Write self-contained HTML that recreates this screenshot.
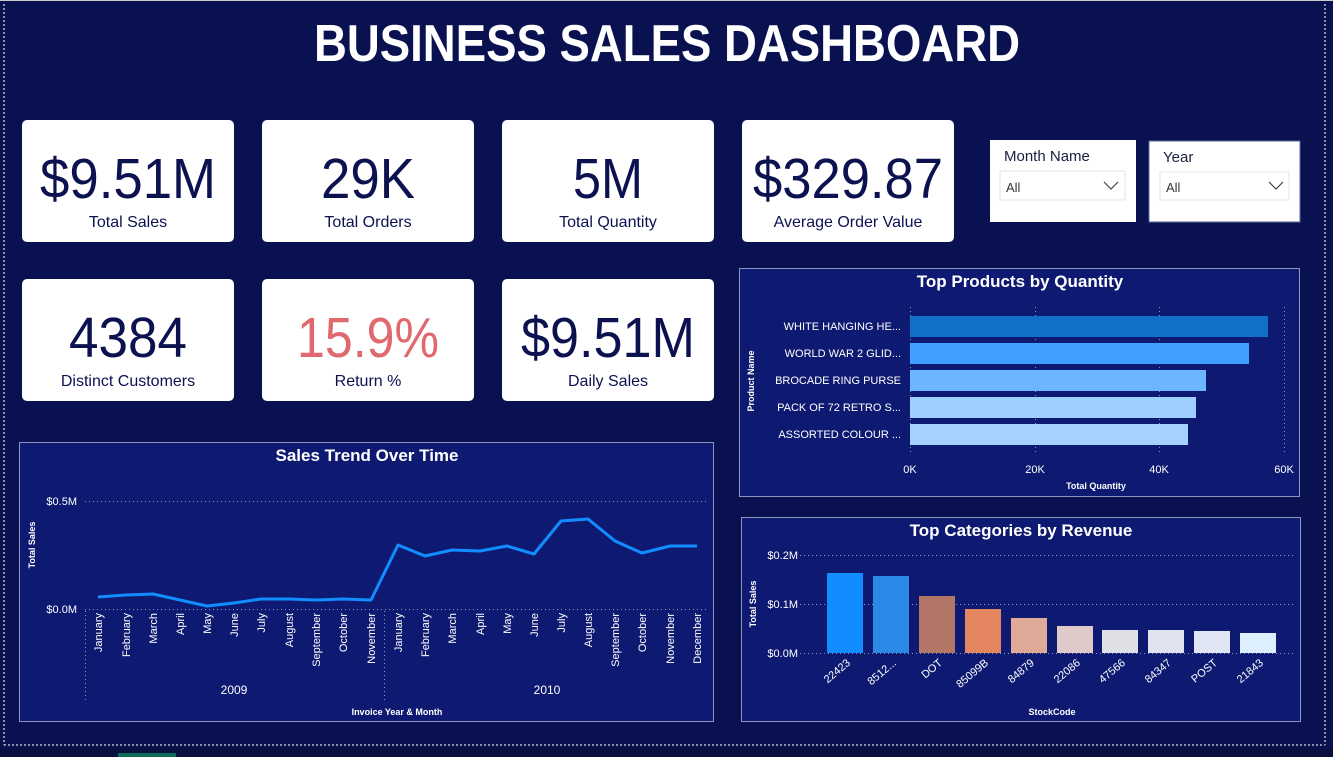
<!DOCTYPE html>
<html><head><meta charset="utf-8"><style>
html,body{margin:0;padding:0;background:#0a1150;}
svg{display:block;font-family:"Liberation Sans",sans-serif;}
</style></head><body>
<svg width="1333" height="757" viewBox="0 0 1333 757" xmlns="http://www.w3.org/2000/svg">
<rect width="1333" height="757" fill="#0a1150"/>
<rect x="0" y="0" width="1333" height="1" fill="#ccc"/>
<rect x="0" y="748" width="1333" height="9" fill="#081040"/>
<rect x="118" y="753" width="58" height="4" fill="#0e6b5a"/>
<line x1="4" y1="4" x2="4" y2="745" stroke="#8a8fa8" stroke-width="2" stroke-dasharray="2 2"/>
<line x1="1325" y1="4" x2="1325" y2="745" stroke="#8a8fa8" stroke-width="2" stroke-dasharray="2 2"/>
<line x1="4" y1="745" x2="1325" y2="745" stroke="#8a8fa8" stroke-width="2" stroke-dasharray="2 2"/>

<text x="667" y="61" fill="#fff" font-weight="bold" font-size="52" text-anchor="middle" textLength="706" lengthAdjust="spacingAndGlyphs">BUSINESS SALES DASHBOARD</text>

<g font-size="57" fill="#0c1250" text-anchor="middle">
<rect x="22" y="120" width="212" height="122" rx="5" fill="#fff"/>
<text x="128" y="198" textLength="176" lengthAdjust="spacingAndGlyphs">$9.51M</text>
<rect x="262" y="120" width="212" height="122" rx="5" fill="#fff"/>
<text x="368" y="198" textLength="94" lengthAdjust="spacingAndGlyphs">29K</text>
<rect x="502" y="120" width="212" height="122" rx="5" fill="#fff"/>
<text x="608" y="198" textLength="70" lengthAdjust="spacingAndGlyphs">5M</text>
<rect x="742" y="120" width="212" height="122" rx="5" fill="#fff"/>
<text x="848" y="198" textLength="190" lengthAdjust="spacingAndGlyphs">$329.87</text>
<rect x="22" y="279" width="212" height="122" rx="5" fill="#fff"/>
<text x="128" y="357" textLength="118" lengthAdjust="spacingAndGlyphs">4384</text>
<rect x="262" y="279" width="212" height="122" rx="5" fill="#fff"/>
<text x="368" y="357" fill="#e0686f" textLength="142" lengthAdjust="spacingAndGlyphs">15.9%</text>
<rect x="502" y="279" width="212" height="122" rx="5" fill="#fff"/>
<text x="608" y="357" textLength="174" lengthAdjust="spacingAndGlyphs">$9.51M</text>
</g>
<g font-size="16" fill="#0c1250" text-anchor="middle">
<text x="128" y="227">Total Sales</text>
<text x="368" y="227">Total Orders</text>
<text x="608" y="227">Total Quantity</text>
<text x="848" y="227">Average Order Value</text>
<text x="128" y="386">Distinct Customers</text>
<text x="368" y="386">Return %</text>
<text x="608" y="386">Daily Sales</text>
</g>

<!-- slicers -->
<rect x="990" y="140" width="146" height="82" fill="#fff"/>
<text x="1004" y="161" font-size="15" fill="#1a2040">Month Name</text>
<rect x="1000" y="171" width="125" height="29" fill="#fff" stroke="#e6e6e6"/>
<text x="1006" y="192" font-size="13" fill="#333">All</text>
<path d="M1104 182 L1111 189 L1118 182" fill="none" stroke="#444" stroke-width="1.2"/>
<rect x="1149" y="141" width="151" height="81" fill="#fff" stroke="#5a6a9a"/>
<text x="1163" y="162" font-size="15" fill="#1a2040">Year</text>
<rect x="1160" y="172" width="129" height="28" fill="#fff" stroke="#e6e6e6"/>
<text x="1166" y="192" font-size="13" fill="#333">All</text>
<path d="M1269 182 L1276 189 L1283 182" fill="none" stroke="#444" stroke-width="1.2"/>

<!-- products -->
<rect x="739.5" y="268.5" width="560" height="228" fill="#0e1a72" stroke="#8c95c0"/>
<text x="1020" y="287" font-size="17" font-weight="bold" fill="#fff" text-anchor="middle">Top Products by Quantity</text>
<g stroke="#8c95c0" stroke-dasharray="1 3">
<line x1="910.5" y1="307" x2="910.5" y2="452"/><line x1="1035.5" y1="307" x2="1035.5" y2="452"/>
<line x1="1159.5" y1="307" x2="1159.5" y2="452"/><line x1="1284.5" y1="307" x2="1284.5" y2="452"/>
</g>
<rect x="910" y="316" width="358" height="21" fill="#1170c8"/>
<rect x="910" y="343" width="339" height="21" fill="#3fa0ff"/>
<rect x="910" y="370" width="296" height="21" fill="#6cb6ff"/>
<rect x="910" y="397" width="286" height="21" fill="#9fcfff"/>
<rect x="910" y="424" width="278" height="21" fill="#a5d2ff"/>
<g font-size="11" fill="#fff" text-anchor="end">
<text x="901" y="330">WHITE HANGING HE...</text>
<text x="901" y="357">WORLD WAR 2 GLID...</text>
<text x="901" y="384">BROCADE RING PURSE</text>
<text x="901" y="411">PACK OF 72 RETRO S...</text>
<text x="901" y="438">ASSORTED COLOUR ...</text>
</g>
<g font-size="11" fill="#fff" text-anchor="middle">
<text x="910" y="473">0K</text><text x="1035" y="473">20K</text><text x="1159" y="473">40K</text><text x="1284" y="473">60K</text>
<text x="1096" y="489" font-size="9" font-weight="bold">Total Quantity</text>
</g>
<text transform="translate(754,381) rotate(-90)" font-size="9" font-weight="bold" fill="#fff" text-anchor="middle">Product Name</text>

<!-- categories -->
<rect x="741.5" y="517.5" width="559" height="204" fill="#0e1a72" stroke="#8c95c0"/>
<text x="1021" y="536" font-size="17" font-weight="bold" fill="#fff" text-anchor="middle">Top Categories by Revenue</text>
<g stroke="#8c95c0" stroke-dasharray="1 3">
<line x1="800" y1="555.5" x2="1295" y2="555.5"/><line x1="800" y1="604.5" x2="1295" y2="604.5"/><line x1="800" y1="653.5" x2="1295" y2="653.5"/>
</g>
<g font-size="11" fill="#fff" text-anchor="end">
<text x="798" y="559">$0.2M</text><text x="798" y="608">$0.1M</text><text x="798" y="657">$0.0M</text>
</g>
<text transform="translate(756,604) rotate(-90)" font-size="9" font-weight="bold" fill="#fff" text-anchor="middle">Total Sales</text>
<rect x="827" y="573" width="36" height="80" fill="#118dff"/>
<rect x="873" y="576" width="36" height="77" fill="#2b8ae8"/>
<rect x="919" y="596" width="36" height="57" fill="#b37566"/>
<rect x="965" y="609" width="36" height="44" fill="#e48760"/>
<rect x="1011" y="618" width="36" height="35" fill="#e0aa98"/>
<rect x="1057" y="626" width="36" height="27" fill="#dfc9c9"/>
<rect x="1102" y="630" width="36" height="23" fill="#dfe0e6"/>
<rect x="1148" y="630" width="36" height="23" fill="#dfe3ee"/>
<rect x="1194" y="631" width="36" height="22" fill="#e0e6f4"/>
<rect x="1240" y="633" width="36" height="20" fill="#ddeeff"/>
<g font-size="11" fill="#fff" text-anchor="end">
<text transform="translate(851,664) rotate(-40)">22423</text>
<text transform="translate(897,664) rotate(-40)">8512...</text>
<text transform="translate(943,664) rotate(-40)">DOT</text>
<text transform="translate(989,664) rotate(-40)">85099B</text>
<text transform="translate(1035,664) rotate(-40)">84879</text>
<text transform="translate(1081,664) rotate(-40)">22086</text>
<text transform="translate(1126,664) rotate(-40)">47566</text>
<text transform="translate(1172,664) rotate(-40)">84347</text>
<text transform="translate(1218,664) rotate(-40)">POST</text>
<text transform="translate(1264,664) rotate(-40)">21843</text>
</g>
<text x="1052" y="715" font-size="9" font-weight="bold" fill="#fff" text-anchor="middle">StockCode</text>

<!-- trend -->
<rect x="19.5" y="442.5" width="694" height="279" fill="#0e1a72" stroke="#8c95c0"/>
<text x="367" y="461" font-size="17" font-weight="bold" fill="#fff" text-anchor="middle">Sales Trend Over Time</text>
<g stroke="#8c95c0" stroke-dasharray="1 3">
<line x1="85" y1="501.5" x2="708" y2="501.5"/><line x1="85" y1="609.5" x2="708" y2="609.5"/>
<line x1="85.5" y1="611" x2="85.5" y2="700"/><line x1="384.5" y1="611" x2="384.5" y2="700"/>
</g>
<g font-size="11" fill="#fff" text-anchor="end">
<text x="77" y="505">$0.5M</text><text x="77" y="613">$0.0M</text>
</g>
<text transform="translate(35,545) rotate(-90)" font-size="9" font-weight="bold" fill="#fff" text-anchor="middle">Total Sales</text>
<polyline fill="none" stroke="#118dff" stroke-width="3" stroke-linejoin="round" points="98,597 126,595 153,594 180,600 207,606 234,603 261,599 289,599 316,600 343,599 371,600 398,545 425,556 452,550 480,551 507,546 534,554 561,521 588,519 615,541 642,553 670,546 697,546"/>
<g font-size="11" fill="#fff" text-anchor="end">
<text transform="translate(102,613) rotate(-90)">January</text>
<text transform="translate(130,613) rotate(-90)">February</text>
<text transform="translate(157,613) rotate(-90)">March</text>
<text transform="translate(184,613) rotate(-90)">April</text>
<text transform="translate(211,613) rotate(-90)">May</text>
<text transform="translate(238,613) rotate(-90)">June</text>
<text transform="translate(265,613) rotate(-90)">July</text>
<text transform="translate(293,613) rotate(-90)">August</text>
<text transform="translate(320,613) rotate(-90)">September</text>
<text transform="translate(347,613) rotate(-90)">October</text>
<text transform="translate(375,613) rotate(-90)">November</text>
<text transform="translate(402,613) rotate(-90)">January</text>
<text transform="translate(429,613) rotate(-90)">February</text>
<text transform="translate(456,613) rotate(-90)">March</text>
<text transform="translate(484,613) rotate(-90)">April</text>
<text transform="translate(511,613) rotate(-90)">May</text>
<text transform="translate(538,613) rotate(-90)">June</text>
<text transform="translate(565,613) rotate(-90)">July</text>
<text transform="translate(592,613) rotate(-90)">August</text>
<text transform="translate(619,613) rotate(-90)">September</text>
<text transform="translate(646,613) rotate(-90)">October</text>
<text transform="translate(674,613) rotate(-90)">November</text>
<text transform="translate(701,613) rotate(-90)">December</text>
</g>
<g font-size="12" fill="#fff" text-anchor="middle">
<text x="234" y="694">2009</text><text x="547" y="694">2010</text>
<text x="397" y="715" font-size="9" font-weight="bold">Invoice Year &amp; Month</text>
</g>
</svg>
</body></html>
